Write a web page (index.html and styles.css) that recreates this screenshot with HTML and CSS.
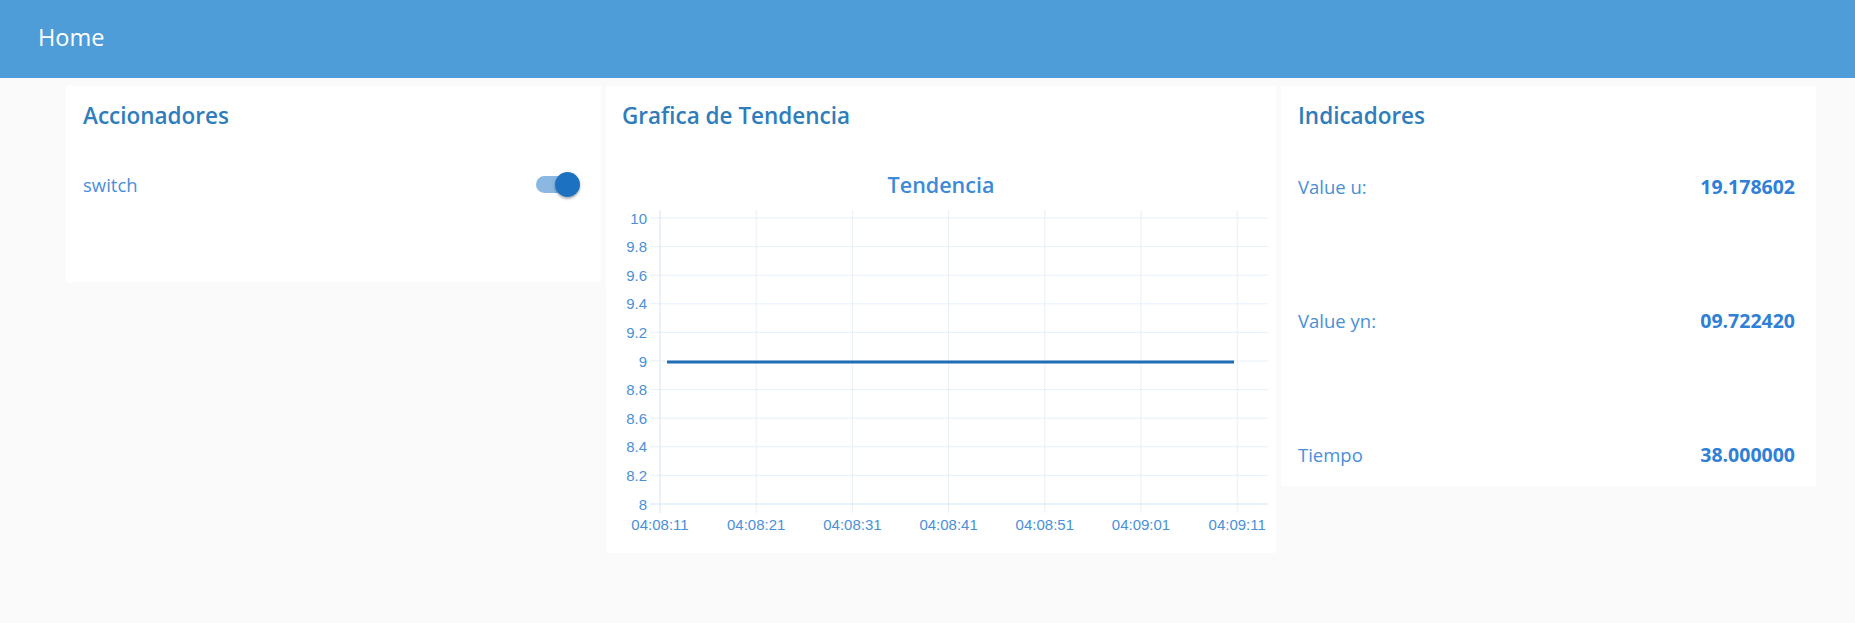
FILE: index.html
```html
<!DOCTYPE html>
<html lang="es">
<head>
<meta charset="utf-8">
<title>Node-RED Dashboard</title>
<link rel="stylesheet" href="styles.css">
</head>
<body>
<header class="toolbar"><span class="toolbar-title">Home</span></header>
<main class="content">
  <section class="card card-acc">
    <p class="card-title">Accionadores</p>
    <div class="row">
      <span class="label">switch</span>
      <span class="switch"><span class="switch-track"></span><span class="switch-thumb"></span></span>
    </div>
  </section>
  <section class="card card-chart">
    <p class="card-title">Grafica de Tendencia</p>
    <svg class="chart" width="656" height="390" viewBox="0 0 656 390">
      <text class="chart-title" x="325" y="43" text-anchor="middle">Tendencia</text>
      <g class="grid">
        <line x1="34" y1="68" x2="652" y2="68"/>
        <line x1="34" y1="96.6" x2="652" y2="96.6"/>
        <line x1="34" y1="125.2" x2="652" y2="125.2"/>
        <line x1="34" y1="153.8" x2="652" y2="153.8"/>
        <line x1="34" y1="182.4" x2="652" y2="182.4"/>
        <line x1="34" y1="211" x2="652" y2="211"/>
        <line x1="34" y1="239.6" x2="652" y2="239.6"/>
        <line x1="34" y1="268.2" x2="652" y2="268.2"/>
        <line x1="34" y1="296.8" x2="652" y2="296.8"/>
        <line x1="34" y1="325.4" x2="652" y2="325.4"/>
        <line x1="140.2" y1="60" x2="140.2" y2="363"/>
        <line x1="236.4" y1="60" x2="236.4" y2="363"/>
        <line x1="332.6" y1="60" x2="332.6" y2="363"/>
        <line x1="428.8" y1="60" x2="428.8" y2="363"/>
        <line x1="525" y1="60" x2="525" y2="363"/>
        <line x1="621.2" y1="60" x2="621.2" y2="363"/>
      </g>
      <g class="axis">
        <line x1="44" y1="60" x2="44" y2="363"/>
        <line x1="34" y1="354" x2="652" y2="354"/>
      </g>
      <g class="ylabels">
        <text x="31" y="73.5">10</text>
        <text x="31" y="102.1">9.8</text>
        <text x="31" y="130.7">9.6</text>
        <text x="31" y="159.3">9.4</text>
        <text x="31" y="187.9">9.2</text>
        <text x="31" y="216.5">9</text>
        <text x="31" y="245.1">8.8</text>
        <text x="31" y="273.7">8.6</text>
        <text x="31" y="302.3">8.4</text>
        <text x="31" y="330.9">8.2</text>
        <text x="31" y="359.5">8</text>
      </g>
      <g class="xlabels">
        <text x="44" y="380">04:08:11</text>
        <text x="140.2" y="380">04:08:21</text>
        <text x="236.4" y="380">04:08:31</text>
        <text x="332.6" y="380">04:08:41</text>
        <text x="428.8" y="380">04:08:51</text>
        <text x="525" y="380">04:09:01</text>
        <text x="621.2" y="380">04:09:11</text>
      </g>
      <line class="series" x1="51" y1="212" x2="618" y2="212"/>
    </svg>
  </section>
  <section class="card card-ind">
    <p class="card-title">Indicadores</p>
    <div class="ind-rows">
      <div class="row"><span class="label">Value u:</span><span class="value">19.178602</span></div>
      <div class="row"><span class="label">Value yn:</span><span class="value">09.722420</span></div>
      <div class="row"><span class="label">Tiempo</span><span class="value">38.000000</span></div>
    </div>
  </section>
</main>
</body>
</html>
```
FILE: styles.css
```css
html, body {
  margin: 0;
  padding: 0;
}
body {
  background: #fafafa;
  font-family: "Open Sans", "Noto Sans", sans-serif;
  width: 1855px;
  height: 623px;
  overflow: hidden;
}
.toolbar {
  height: 78px;
  background: #4e9dd8;
  display: flex;
  align-items: center;
  padding-left: 38px;
}
.toolbar-title {
  color: #ffffff;
  font-size: 23.5px;
  line-height: 1;
  margin-top: -2px;
}
.content {
  display: flex;
  align-items: flex-start;
  gap: 5px;
  padding: 8px 0 0 66px;
}
.card {
  background: #ffffff;
  box-sizing: border-box;
}
.card-acc {
  width: 535px;
  height: 196px;
  padding: 0 21px 0 17px;
}
.card-chart {
  width: 670px;
  height: 467px;
  padding: 0 0 0 16px;
}
.card-ind {
  width: 535px;
  height: 400px;
  padding: 0 21px 0 17px;
}
.card-title {
  margin: 0;
  height: 54px;
  padding-top: 6px;
  box-sizing: border-box;
  line-height: 48px;
  font-size: 22.5px;
  font-weight: 600;
  color: #2f7dba;
  white-space: nowrap;
}
.row {
  height: 48px;
  display: flex;
  align-items: center;
  justify-content: space-between;
}
.card-acc .row {
  margin-top: 20px;
}
.label {
  font-size: 18.5px;
  color: #4a8fd6;
}
.value {
  font-size: 19.5px;
  font-weight: 700;
  color: #2f80d6;
}
.ind-rows {
  display: flex;
  flex-direction: column;
  gap: 86px;
  margin-top: 22px;
}
.switch {
  position: relative;
  width: 44px;
  height: 25px;
  display: block;
}
.switch-track {
  position: absolute;
  left: 0;
  top: 4px;
  width: 42px;
  height: 17px;
  border-radius: 9px;
  background: #8ab8e1;
}
.switch-thumb {
  position: absolute;
  right: 0;
  top: 0;
  width: 25px;
  height: 25px;
  border-radius: 50%;
  background: #1c72c0;
  box-shadow: 0 2px 2px rgba(0,0,0,0.22), 0 1px 4px rgba(0,0,0,0.12);
}
.chart {
  display: block;
  margin: 10px 0 0 -6px;
}
.chart-title {
  font-family: "Open Sans", sans-serif;
  font-size: 21.5px;
  font-weight: 600;
  fill: #3c8ad8;
}
.grid line {
  stroke: #e7f0fa;
  stroke-width: 1;
}
.axis line {
  stroke: #d3e4f6;
  stroke-width: 1;
}
.ylabels text {
  font-family: "Liberation Sans", Arial, sans-serif;
  font-size: 15px;
  fill: #4a90d9;
  text-anchor: end;
}
.xlabels text {
  font-family: "Liberation Sans", Arial, sans-serif;
  font-size: 15px;
  fill: #4a90d9;
  text-anchor: middle;
}
.series {
  stroke: #1f6db4;
  stroke-width: 3;
}
```
